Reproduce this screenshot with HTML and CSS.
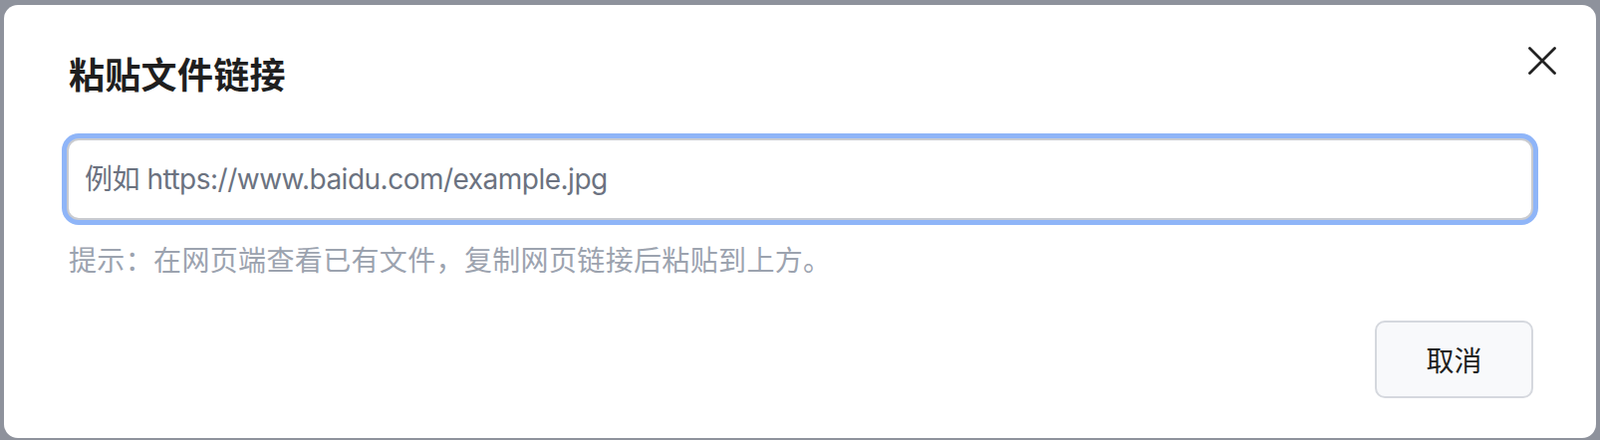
FILE: index.html
```html
<!DOCTYPE html>
<html lang="zh-CN">
<head>
<meta charset="utf-8">
<title>粘贴文件链接</title>
<link rel="stylesheet" href="styles.css">
</head>
<body>
<div class="dialog">
  <h2 class="title">粘贴文件链接</h2>
  <button class="close" aria-label="关闭">
    <svg width="28" height="28" viewBox="0 0 28 28"><path d="M1.5 1.5 L26.5 26.5 M26.5 1.5 L1.5 26.5" stroke="#222" stroke-width="2.8" stroke-linecap="round" fill="none"/></svg>
  </button>
  <input class="url-input" type="text" placeholder="例如 https://www.baidu.com/example.jpg">
  <p class="hint">提示：在网页端查看已有文件，复制网页链接后粘贴到上方。</p>
  <div class="footer">
    <button class="btn-cancel">取消</button>
  </div>
</div>
</body>
</html>
```

FILE: styles.css
```css
html, body {
  margin: 0;
  padding: 0;
}
body {
  background: #8e929c;
  width: 1606px;
  height: 442px;
  overflow: hidden;
  font-family: "Inter", "Noto Sans CJK SC", sans-serif;
}
.dialog {
  position: relative;
  margin: 5px 4px 0 4px;
  background: #ffffff;
  border-radius: 14px;
  padding: 50px 63px 40px 63px;
  box-sizing: border-box;
  height: 435px;
}
.title {
  margin: 0;
  padding-left: 2px;
  font-family: "Noto Sans CJK SC", sans-serif;
  font-size: 36px;
  line-height: 36px;
  font-weight: 700;
  letter-spacing: 0.3px;
  color: #1f1f1f;
}
.close {
  position: absolute;
  top: 42px;
  right: 40px;
  width: 28px;
  height: 28px;
  padding: 0;
  border: 0;
  background: none;
}
.close svg {
  display: block;
}
.url-input {
  display: block;
  margin-top: 48px;
  width: 100%;
  height: 82px;
  box-sizing: border-box;
  border: 2px solid #c9cbd0;
  border-radius: 12px;
  box-shadow: 0 0 0 5px #8fb5f8;
  outline: none;
  padding: 0 16px;
  font-family: "Inter", "Noto Sans CJK SC", sans-serif;
  font-size: 28px;
  letter-spacing: -0.5px;
  color: #1f2937;
  background: #fff;
}
.url-input::placeholder {
  color: #6b7280;
}
.hint {
  margin: 25px 0 0 0;
  padding-left: 2px;
  font-family: "Noto Sans CJK SC", sans-serif;
  font-size: 28px;
  line-height: 28px;
  letter-spacing: 0.35px;
  color: #9ca3af;
}
.footer {
  display: flex;
  justify-content: flex-end;
  margin-top: 48px;
}
.btn-cancel {
  width: 159px;
  height: 78px;
  box-sizing: border-box;
  border: 2px solid #d5d8de;
  border-radius: 10px;
  background: #f8f9fb;
  font-family: "Noto Sans CJK SC", sans-serif;
  font-size: 28px;
  color: #1f1f1f;
  padding: 0;
}
```
